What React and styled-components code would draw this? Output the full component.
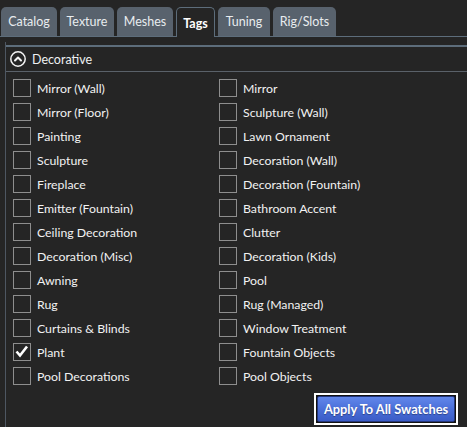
import React from "react";
import styled, { createGlobalStyle } from "styled-components";

const Global = createGlobalStyle`
  html, body { margin: 0; padding: 0; background: #252525; }
  body { font-family: "Segoe UI", Lato, "Open Sans", sans-serif; font-size: 12px; color: #f0f0f0; }
  * { box-sizing: border-box; }
`;

const Page = styled.div`
  width: 467px;
  height: 427px;
  overflow: hidden;
  background: #252525;
`;

const TabBar = styled.div`
  display: flex;
  align-items: flex-end;
  gap: 3px;
  height: 37px;
  padding: 7px 0 0 1px;
  border-bottom: 1px solid #5d6d7b;
`;

const Tab = styled.div`
  width: ${(p) => p.$w}px;
  height: ${(p) => (p.$active ? 30 : 29)}px;
  margin-bottom: ${(p) => (p.$active ? -1 : 0)}px;
  display: flex;
  justify-content: center;
  padding-top: ${(p) => (p.$active ? 9 : 8)}px;
  border-radius: 5px 5px 0 0;
  background: ${(p) => (p.$active ? "#252525" : "#58626d")};
  border: ${(p) => (p.$active ? "1px solid #5d6d7b" : "none")};
  border-bottom: none;
  color: ${(p) => (p.$active ? "#ffffff" : "#e8ecef")};
  font-weight: ${(p) => (p.$active ? 700 : 400)};
  font-size: 12.5px;
  line-height: 14px;
`;

const Panel = styled.div`
  margin: 5px 0 0 5px;
  border-left: 1px solid #4e5762;
  padding-top: 3px;
  height: 385px;
`;

const Expander = styled.div`
  border-top: 2px solid #5d6d7b;
`;

const Header = styled.div`
  display: flex;
  align-items: center;
  gap: 6px;
  height: 25px;
  padding-left: 4px;
  border-bottom: 1px solid #5a6169;
  font-size: 12.5px;
  color: #eef0f2;
`;

const Grid = styled.div`
  display: grid;
  grid-template-columns: 206px 1fr;
  grid-auto-rows: 24px;
  padding: 4px 0 0 7px;
`;

const Row = styled.label`
  display: flex;
  align-items: center;
  gap: 6px;
  font-size: 12.3px;
  color: #f2f2f2;
  white-space: nowrap;
`;

const Box = styled.span`
  width: 18px;
  height: 18px;
  flex: none;
  border: 1px solid #8e8e8e;
  display: flex;
  align-items: center;
  justify-content: center;
`;

const Footer = styled.div`
  display: flex;
  justify-content: flex-end;
  padding: 5px 9px 0 0;
`;

const FocusRing = styled.div`
  border: 2px solid #ffffff;
  padding: 1px;
  background: #111;
`;

const Button = styled.button`
  width: 138px;
  height: 26px;
  border: 1px solid #24367a;
  border-radius: 2px;
  background: linear-gradient(#6287ea, #4a6fd9 50%, #3b5cc6);
  color: #ffffff;
  font-family: inherit;
  font-weight: 700;
  font-size: 12.8px;
  padding: 0;
  text-shadow: 0 1px 1px rgba(0, 0, 0, 0.35);
`;

const tabs = [
  ["Catalog", 56],
  ["Texture", 54],
  ["Meshes", 56],
  ["Tags", 39],
  ["Tuning", 52],
  ["Rig/Slots", 63],
];

const items = [
  ["Mirror (Wall)", "Mirror"],
  ["Mirror (Floor)", "Sculpture (Wall)"],
  ["Painting", "Lawn Ornament"],
  ["Sculpture", "Decoration (Wall)"],
  ["Fireplace", "Decoration (Fountain)"],
  ["Emitter (Fountain)", "Bathroom Accent"],
  ["Ceiling Decoration", "Clutter"],
  ["Decoration (Misc)", "Decoration (Kids)"],
  ["Awning", "Pool"],
  ["Rug", "Rug (Managed)"],
  ["Curtains & Blinds", "Window Treatment"],
  ["Plant", "Fountain Objects"],
  ["Pool Decorations", "Pool Objects"],
];

const CollapseIcon = () => (
  <svg width="16" height="16" viewBox="0 0 16 16">
    <circle cx="8" cy="8" r="7.2" fill="none" stroke="#f4f4f4" strokeWidth="1.5" />
    <path d="M5 9.5 L8 6.5 L11 9.5" fill="none" stroke="#f4f4f4" strokeWidth="2" strokeLinecap="round" strokeLinejoin="round" />
  </svg>
);

const Check = () => (
  <svg width="16" height="16" viewBox="0 0 16 16">
    <path d="M2.5 7.5 L6 11.5 L13 2.5" fill="none" stroke="#ffffff" strokeWidth="2.6" />
  </svg>
);

const Item = ({ label, checked }) => (
  <Row>
    <Box>{checked && <Check />}</Box>
    {label}
  </Row>
);

export default function App() {
  return (
    <Page>
      <Global />
      <TabBar>
        {tabs.map(([t, w]) => (
          <Tab key={t} $w={w} $active={t === "Tags"}>
            {t}
          </Tab>
        ))}
      </TabBar>
      <Panel>
        <Expander>
          <Header>
            <CollapseIcon />
            Decorative
          </Header>
          <Grid>
            {items.map(([a, b]) => (
              <React.Fragment key={a}>
                <Item label={a} checked={a === "Plant"} />
                <Item label={b} />
              </React.Fragment>
            ))}
          </Grid>
          <Footer>
            <FocusRing>
              <Button>Apply To All Swatches</Button>
            </FocusRing>
          </Footer>
        </Expander>
      </Panel>
    </Page>
  );
}
